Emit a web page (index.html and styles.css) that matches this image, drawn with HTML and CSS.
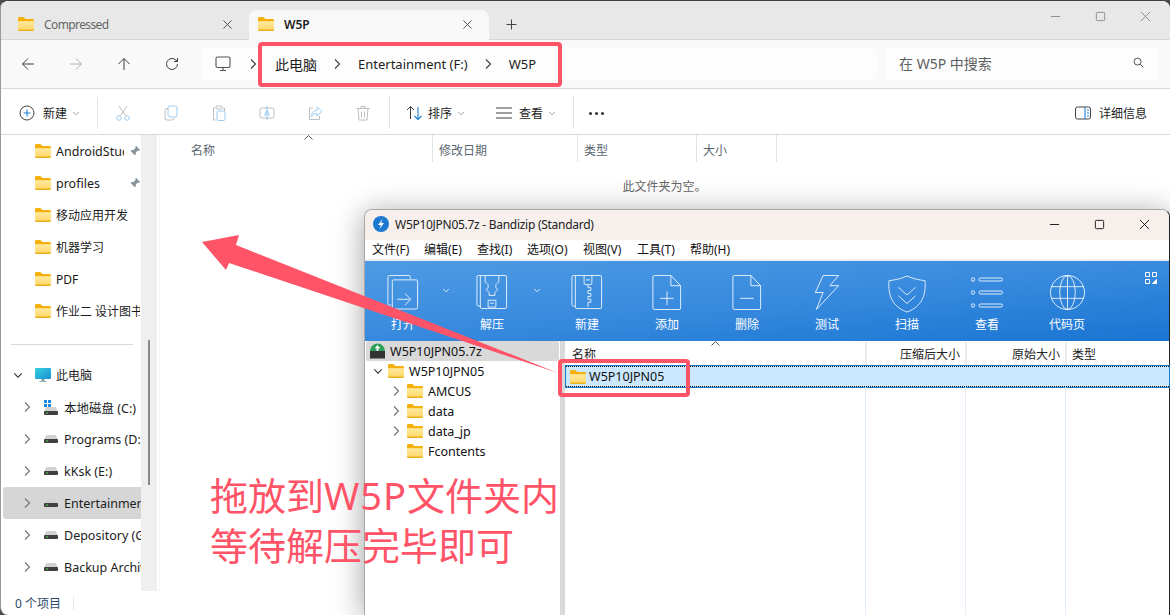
FILE: index.html
```html
<!DOCTYPE html>
<html lang="zh-CN">
<head>
    <meta charset="utf-8">
    <title>拖放到W5P文件夹内</title>
    <link rel="stylesheet" href="styles.css">
</head>
<body>
    <svg class="sprite" width="0" height="0">
        <defs>
            <linearGradient id="folderfront" x1="0" y1="0" x2="0" y2="1">
                <stop offset="0" stop-color="#ffeaa0"/>
                <stop offset="1" stop-color="#fdd663"/>
            </linearGradient>
            <linearGradient id="screen" x1="0" y1="0" x2="1" y2="1">
                <stop offset="0" stop-color="#35d0e0"/>
                <stop offset="1" stop-color="#1c8fd0"/>
            </linearGradient>
            <symbol id="folder" viewBox="0 0 16 14">
                <path d="M0 1.500C0 .7.6 0 1.400 0h4l2 2h7.200c.8 0 1.400.6 1.400 1.400V12H0z" fill="#f4b10d"/>
                <path d="M0 4.200h16v8.400c0 .8-.6 1.400-1.400 1.400H1.400C.6 14 0 13.400 0 12.600z" fill="url(#folderfront)"/>
                <path d="M0 12.800c0 .7.6 1.200 1.400 1.200h13.200c.8 0 1.400-.5 1.400-1.200v-.4H0z" fill="#eeaf1c"/>
            </symbol>
            <symbol id="drive" viewBox="0 0 14 8">
                <path d="M2.500 0h9L14 4.500H0z" fill="#d2d2d2"/>
                <rect y="4" width="14" height="4" rx="1" fill="#3f3f3f"/>
                <rect x="2" y="5.500" width="2" height="1" fill="#5fd35f"/>
            </symbol>
            <symbol id="pin" viewBox="0 0 12 12">
                <path d="M7 .8 11.200 5 10 5.700 8.800 5.400 6.800 7.400 6.900 9.300 5.800 10.200 3.800 8.200.9 11.100.8 11 3.700 8.100 1.700 6.100 2.700 5 4.500 5.100 6.500 3.100 6.300 2z" fill="#8b959c"/>
            </symbol>
            <symbol id="chev-right" viewBox="0 0 8 12">
                <path d="M2 1.500 6.500 6 2 10.500" fill="none" stroke="currentColor" stroke-width="1.200"/>
            </symbol>
            <symbol id="chev-down" viewBox="0 0 12 8">
                <path d="M1.500 1.500 6 6l4.500-4.500" fill="none" stroke="currentColor" stroke-width="1.300"/>
            </symbol>
        </defs>
    </svg>

    <section class="explorer">
        <div class="tabbar">
            <div class="tab tab-off">
                <svg class="folder"><use href="#folder"/></svg>
                <span class="tab-name">Compressed</span>
                <svg class="tab-x" viewBox="0 0 10 10"><path d="M.5.500l9 9m0-9l-9 9"/></svg>
            </div>
            <div class="tab tab-on">
                <svg class="folder"><use href="#folder"/></svg>
                <span class="tab-name">W5P</span>
                <svg class="tab-x" viewBox="0 0 10 10"><path d="M.5.500l9 9m0-9l-9 9"/></svg>
            </div>
            <svg class="tab-plus" viewBox="0 0 11 11"><path d="M5.500.500v10M.5 5.500h10"/></svg>
            <div class="winbtns winbtns-grey">
                <svg viewBox="0 0 12 12"><path d="M1 6h10"/></svg>
                <svg viewBox="0 0 12 12"><rect x="1.500" y="1.500" width="9" height="9" rx="1"/></svg>
                <svg viewBox="0 0 12 12"><path d="M1 1l10 10m0-10L1 11"/></svg>
            </div>
        </div>

        <div class="addrbar">
            <div class="nav">
                <svg viewBox="0 0 14 14"><path d="M13 7H1.500M7 1.500 1.500 7 7 12.500"/></svg>
                <svg class="nav-off" viewBox="0 0 14 14"><path d="M1 7h11.500M7 1.500 12.500 7 7 12.500"/></svg>
                <svg viewBox="0 0 14 14"><path d="M7 13V1.500M1.500 7 7 1.500 12.500 7"/></svg>
                <svg viewBox="0 0 14 14"><path d="M12.500 7a5.500 5.500 0 1 1-1.700-4L12.500 4.500M12.500 1v3.500H9"/></svg>
            </div>
            <div class="addr">
                <svg class="addr-pc" viewBox="0 0 16 16"><rect x="1" y="1" width="14" height="10.500" rx="1.500"/><path d="M5 14.500h6M8 11.500v3"/></svg>
                <svg class="crumb-chev"><use href="#chev-right"/></svg>
                <span class="crumb crumb-cjk">此电脑</span>
                <svg class="crumb-chev"><use href="#chev-right"/></svg>
                <span class="crumb">Entertainment (F:)</span>
                <svg class="crumb-chev"><use href="#chev-right"/></svg>
                <span class="crumb">W5P</span>
            </div>
            <div class="search">
                <span>在 W5P 中搜索</span>
                <svg viewBox="0 0 12 12"><circle cx="5" cy="5" r="3.800"/><path d="M7.800 7.800 11 11"/></svg>
            </div>
        </div>

        <div class="toolbar">
            <div class="tool tool-new">
                <svg class="ic" viewBox="0 0 16 16"><circle cx="8" cy="8" r="7" class="ln"/><path d="M8 4.500v7M4.500 8h7" class="bl"/></svg>
                <span>新建</span>
                <svg class="tool-chev"><use href="#chev-down"/></svg>
            </div>
            <i class="tsep"></i>
            <div class="tool-off">
                <svg class="ic" viewBox="0 0 16 16"><path d="M4 1l6.500 9.500M12 1 5.500 10.500" class="gr"/><circle cx="4" cy="13" r="2.300" class="lb"/><circle cx="12" cy="13" r="2.300" class="lb"/></svg>
                <svg class="ic" viewBox="0 0 16 16"><rect x="5" y="1" width="9" height="11" rx="2" class="lb"/><path d="M5 3.500H4a2 2 0 0 0-2 2V13a2 2 0 0 0 2 2h5a2 2 0 0 0 2-2" class="gr"/></svg>
                <svg class="ic" viewBox="0 0 16 16"><path d="M4 3H2.500v12h2M12 3h1.500v3" class="gr"/><rect x="5" y="1" width="6" height="3" rx="1" class="gr"/><rect x="6" y="6" width="8" height="9.500" rx="1.500" class="lb"/></svg>
                <svg class="ic" viewBox="0 0 16 16"><rect x="1" y="3" width="14" height="10" rx="2" class="gr"/><path d="M5.500 11l2.500-6 2.500 6M6.500 9h3" class="lb"/><path d="M8 1v14" class="lb"/></svg>
                <svg class="ic" viewBox="0 0 16 16"><path d="M6 3H2.500v11.500h10V11" class="gr"/><path d="M10 2l5 4.500-5 4.500V8.500C7 8.500 5.500 9.500 4.500 12c0-4 2-6.500 5.500-6.500z" class="lb"/></svg>
                <svg class="ic" viewBox="0 0 16 16"><path d="M1.500 3.500h13M6 3.500V1.500h4v2M3 3.500l1 11.500h8l1-11.500M6.500 6.500v6M9.500 6.500v6" class="gr"/></svg>
            </div>
            <i class="tsep"></i>
            <div class="tool tool-sort">
                <svg class="ic" viewBox="0 0 16 16"><path d="M1 5l3.500-3.500L8 5M4.500 1.500V14" class="ln"/><path d="M8.500 11l3.500 3.500 3.500-3.500M12 14.500V2" class="bl"/></svg>
                <span>排序</span>
                <svg class="tool-chev"><use href="#chev-down"/></svg>
            </div>
            <div class="tool tool-view">
                <svg class="ic" viewBox="0 0 16 16"><path d="M0 3h16M0 8h16M0 13h16" class="ln"/></svg>
                <span>查看</span>
                <svg class="tool-chev"><use href="#chev-down"/></svg>
            </div>
            <i class="tsep"></i>
            <div class="more"><i></i><i></i><i></i></div>
            <div class="details">
                <svg class="ic" viewBox="0 0 16 14"><rect x=".5" y="1" width="15" height="12" rx="2" class="ln"/><path d="M10 1v12" class="bl"/><path d="M12 4h2M12 7h2M12 10h2" class="bl"/></svg>
                <span>详细信息</span>
            </div>
        </div>

        <div class="main">
            <nav class="side">
                <div class="qrow"><svg class="folder"><use href="#folder"/></svg><span class="qname qname-pin">AndroidStudio</span><svg class="pin"><use href="#pin"/></svg></div>
                <div class="qrow"><svg class="folder"><use href="#folder"/></svg><span class="qname qname-pin">profiles</span><svg class="pin"><use href="#pin"/></svg></div>
                <div class="qrow"><svg class="folder"><use href="#folder"/></svg><span class="qname">移动应用开发</span></div>
                <div class="qrow"><svg class="folder"><use href="#folder"/></svg><span class="qname">机器学习</span></div>
                <div class="qrow"><svg class="folder"><use href="#folder"/></svg><span class="qname">PDF</span></div>
                <div class="qrow"><svg class="folder"><use href="#folder"/></svg><span class="qname">作业二 设计图书</span></div>
                <div class="side-div"></div>
                <div class="pcrow">
                    <svg class="pcrow-chev"><use href="#chev-down"/></svg>
                    <svg class="pcrow-ic" viewBox="0 0 16 16"><rect y="1" width="16" height="11" rx="1" fill="url(#screen)"/><rect x="6.500" y="12" width="3" height="2" fill="#7fa2a8"/><rect x="4.500" y="14" width="7" height="1" fill="#9ab3b8"/></svg>
                    <span>此电脑</span>
                </div>
                <div class="drow">
                    <svg class="drow-chev"><use href="#chev-right"/></svg>
                    <span class="drow-ic drow-sys">
                        <svg class="winlogo" viewBox="0 0 7 7"><path d="M0 0h3v3H0zM4 0h3v3H4zM0 4h3v3H0zM4 4h3v3H4z" fill="#1a8ae0"/></svg>
                        <svg class="drive"><use href="#drive"/></svg>
                    </span>
                    <span class="dname">本地磁盘 (C:)</span>
                </div>
                <div class="drow">
                    <svg class="drow-chev"><use href="#chev-right"/></svg>
                    <span class="drow-ic"><svg class="drive"><use href="#drive"/></svg></span>
                    <span class="dname">Programs (D:)</span>
                </div>
                <div class="drow">
                    <svg class="drow-chev"><use href="#chev-right"/></svg>
                    <span class="drow-ic"><svg class="drive"><use href="#drive"/></svg></span>
                    <span class="dname">kKsk (E:)</span>
                </div>
                <div class="drow drow-on">
                    <svg class="drow-chev"><use href="#chev-right"/></svg>
                    <span class="drow-ic"><svg class="drive"><use href="#drive"/></svg></span>
                    <span class="dname">Entertainment (F:)</span>
                </div>
                <div class="drow">
                    <svg class="drow-chev"><use href="#chev-right"/></svg>
                    <span class="drow-ic"><svg class="drive"><use href="#drive"/></svg></span>
                    <span class="dname">Depository (G:)</span>
                </div>
                <div class="drow">
                    <svg class="drow-chev"><use href="#chev-right"/></svg>
                    <span class="drow-ic"><svg class="drive"><use href="#drive"/></svg></span>
                    <span class="dname">Backup Archive (H:)</span>
                </div>
            </nav>
            <div class="side-scroll"><i></i></div>
            <div class="files">
                <div class="cols">
                    <div class="col col-name">名称</div>
                    <div class="col col-date">修改日期</div>
                    <div class="col col-type">类型</div>
                    <div class="col col-size">大小</div>
                    <svg class="sort-caret" viewBox="0 0 9 5"><path d="M.5 4.500l4-4 4 4"/></svg>
                </div>
                <p class="empty">此文件夹为空。</p>
            </div>
        </div>

        <div class="status"><span>0 个项目</span><i></i></div>
    </section>

    <section class="bandizip">
        <div class="bz-title">
            <svg class="bz-logo" viewBox="0 0 16 16"><circle cx="8" cy="8" r="8" fill="#1c79cf"/><path d="M9.500 3 5 9h2.800l-1.300 4L11 7H8.200z" fill="#fff"/></svg>
            <span class="bz-name">W5P10JPN05.7z - Bandizip (Standard)</span>
            <div class="winbtns winbtns-dark">
                <svg viewBox="0 0 12 12"><path d="M1 6h10"/></svg>
                <svg viewBox="0 0 12 12"><rect x="1.500" y="1.500" width="9" height="9" rx="1"/></svg>
                <svg viewBox="0 0 12 12"><path d="M1 1l10 10m0-10L1 11"/></svg>
            </div>
        </div>
        <div class="bz-menu">
            <span>文件(F)</span><span>编辑(E)</span><span>查找(I)</span><span>选项(O)</span><span>视图(V)</span><span>工具(T)</span><span>帮助(H)</span>
        </div>
        <div class="bz-tools">
            <div class="bz-tool bz-open">
                <svg viewBox="0 0 32 36"><path d="M4 31H2a1.500 1.500 0 0 1-1.500-1.500V2A1.500 1.500 0 0 1 2 .5h20A1.500 1.500 0 0 1 23.500 2v2"/><rect x="5" y="5" width="26" height="30" rx="1.500"/><path d="M10 25h13M18 19l6 6-6 6"/></svg>
                <span>打开</span>
            </div>
            <svg class="bz-drop bz-drop-a"><use href="#chev-down"/></svg>
            <div class="bz-tool bz-extract">
                <svg viewBox="0 0 32 36"><path d="M4 32H2a1.500 1.500 0 0 1-1.500-1.500V2A1.500 1.500 0 0 1 2 .5h3"/><rect x="4" y=".5" width="27" height="34" rx="1.500"/><path d="M9 1v6l3 3v3l-2 2 3 3v3h6v-3l3-3-2-2v-3l3-3V1M12 26h8v7h-8zM14 29h4"/></svg>
                <span>解压</span>
            </div>
            <svg class="bz-drop bz-drop-b"><use href="#chev-down"/></svg>
            <div class="bz-tool bz-new">
                <svg viewBox="0 0 32 36"><path d="M4 32H2a1.500 1.500 0 0 1-1.500-1.500V2A1.500 1.500 0 0 1 2 .5h3"/><rect x="4" y=".5" width="27" height="34" rx="1.500"/><path d="M13 1v7a2 2 0 0 0 2 2h4a2 2 0 0 0 2-2V1M15 5h4M17 10v3h3v3h-3v3h3v3h-3v3h3v3h-3v5"/></svg>
                <span>新建</span>
            </div>
            <div class="bz-tool bz-add">
                <svg viewBox="0 0 30 36"><path d="M.5 2A1.500 1.500 0 0 1 2 .5h17L29 11v23a1.500 1.500 0 0 1-1.500 1.500H2A1.500 1.500 0 0 1 .5 34zM19 .5V11h10M8 24h14M15 17v14"/></svg>
                <span>添加</span>
            </div>
            <div class="bz-tool bz-del">
                <svg viewBox="0 0 30 36"><path d="M.5 2A1.500 1.500 0 0 1 2 .5h17L29 11v23a1.500 1.500 0 0 1-1.500 1.500H2A1.500 1.500 0 0 1 .5 34zM19 .5V11h10M8 24h14"/></svg>
                <span>删除</span>
            </div>
            <div class="bz-tool bz-test">
                <svg viewBox="0 0 26 36"><path d="M9 .5h16L16 11h9L2 35.500 9 18H1z"/></svg>
                <span>测试</span>
            </div>
            <div class="bz-tool bz-scan">
                <svg viewBox="0 0 40 40"><path d="M20 1c6 3 12 4 19 5 1 15-3 27-19 33C4 33 0 21 1 6c7-1 13-2 19-5z"/><path d="M11 13l9 8 9-8M11 22l9 8 9-8"/></svg>
                <span>扫描</span>
            </div>
            <div class="bz-tool bz-view">
                <svg viewBox="0 0 32 33"><circle cx="2" cy="3.500" r="1.700"/><circle cx="2" cy="16.500" r="1.700"/><circle cx="2" cy="29.500" r="1.700"/><rect x="8" y="2" width="23.500" height="3" rx="1.500"/><rect x="8" y="15" width="23.500" height="3" rx="1.500"/><rect x="8" y="28" width="23.500" height="3" rx="1.500"/></svg>
                <span>查看</span>
            </div>
            <div class="bz-tool bz-page">
                <svg viewBox="0 0 36 36"><circle cx="18" cy="18" r="17.500"/><ellipse cx="18" cy="18" rx="8" ry="17.500"/><path d="M18 .5v35M1.500 12h33M1.500 24h33"/></svg>
                <span>代码页</span>
            </div>
            <svg class="bz-grid" viewBox="0 0 12 12"><path d="M.5.500h4v4h-4zM7.500.500h4v4h-4zM.5 7.500h4v4h-4z"/><path d="M11.500 7.500v4h-4z" class="bz-grid-fill"/></svg>
        </div>
        <div class="bz-main">
            <div class="bz-tree">
                <div class="bz-root">
                    <svg class="bz-7z" viewBox="0 0 16 16"><path d="M0 8a8 8 0 0 1 16 0z" fill="#2f9e58"/><path d="M8 1.500 5 5h2v3h2V5h2z" fill="#fff"/><rect y="8" width="16" height="8" fill="#333"/></svg>
                    <span>W5P10JPN05.7z</span>
                </div>
                <div class="bz-row bz-lv0"><svg class="bz-open-chev"><use href="#chev-down"/></svg><svg class="folder"><use href="#folder"/></svg><span>W5P10JPN05</span></div>
                <div class="bz-row bz-lv1"><svg class="bz-chev"><use href="#chev-right"/></svg><svg class="folder"><use href="#folder"/></svg><span>AMCUS</span></div>
                <div class="bz-row bz-lv1"><svg class="bz-chev"><use href="#chev-right"/></svg><svg class="folder"><use href="#folder"/></svg><span>data</span></div>
                <div class="bz-row bz-lv1"><svg class="bz-chev"><use href="#chev-right"/></svg><svg class="folder"><use href="#folder"/></svg><span>data_jp</span></div>
                <div class="bz-row bz-lv2"><svg class="folder"><use href="#folder"/></svg><span>Fcontents</span></div>
            </div>
            <div class="bz-split"></div>
            <div class="bz-list">
                <div class="bz-head">
                    <div class="bz-h bz-h-name">名称</div>
                    <div class="bz-h bz-h-num">压缩后大小</div>
                    <div class="bz-h bz-h-num">原始大小</div>
                    <div class="bz-h bz-h-type">类型</div>
                    <svg class="bz-caret" viewBox="0 0 9 5"><path d="M.5 4.500l4-4 4 4"/></svg>
                </div>
                <div class="bz-item">
                    <svg class="folder"><use href="#folder"/></svg>
                    <span>W5P10JPN05</span>
                </div>
                <div class="bz-body">
                    <i></i><i></i><i></i><i></i>
                </div>
            </div>
        </div>
    </section>

    <div class="mark mark-addr"></div>
    <div class="mark mark-item"></div>
    <svg class="arrow" viewBox="0 0 1170 615"><path d="M202 242 239 235 236 245 558 373 229 263 226 270z"/></svg>
    <p class="note">拖放到<span class="note-lat">W5P</span>文件夹内<br>等待解压完毕即可</p>
</body>
</html>
```

FILE: styles.css
```css
* {
    box-sizing: border-box;
}

html, body {
    margin: 0;
    height: 100%;
}

body {
    position: relative;
    width: 1170px;
    height: 615px;
    overflow: hidden;
    background-color: #4a4a4a;
    font-family: "Noto Sans", "Noto Sans CJK SC", sans-serif;
    font-size: 12px;
    color: #1c1c1c;
}

svg {
    display: block;
    flex: none;
}

.sprite {
    position: absolute;
}

.folder {
    width: 16px;
    height: 14px;
    flex: none;
}

/* file explorer window */
.explorer {
    position: absolute;
    left: 0;
    top: 0;
    width: 1170px;
    height: 615px;
    display: flex;
    flex-direction: column;
    overflow: hidden;
    background-color: #ffffff;
    border-top: 1px solid #3e3e3e;
    border-left: 1px solid #999999;
    border-radius: 8px 8px 0 8px;
}

.tabbar {
    height: 39px;
    flex: none;
    display: flex;
    align-items: flex-end;
    padding-left: 1px;
    background-color: #e8e8e8;
    border-bottom: 1px solid #d6d6d6;
}

.tab {
    width: 240px;
    height: 30px;
    margin-left: 7px;
    margin-bottom: -1px;
    padding: 0 17px 2px 9px;
    display: flex;
    align-items: center;
    border-radius: 8px 8px 0 0;
    color: #666666;
    font-size: 12px;
}

.tab .folder {
    margin-right: 10px;
}

.tab-off .tab-name {
    letter-spacing: -0.6px;
}

.tab-on {
    margin-left: 0;
    color: #1c1c1c;
    font-weight: 600;
    background-color: #f8f8f8;
}

.tab-name {
    flex: 1;
}

.tab-x {
    width: 9px;
    height: 9px;
}

.tab-x path, .tab-plus path {
    fill: none;
    stroke: #444444;
    stroke-width: 1;
}

.tab-plus {
    width: 11px;
    height: 11px;
    margin: 0 0 9px 17px;
}

.winbtns {
    margin-left: auto;
    display: flex;
    gap: 34px;
    padding-right: 19px;
}

.winbtns svg {
    width: 11px;
    height: 11px;
    fill: none;
    stroke-width: 1;
}

.winbtns-grey {
    align-self: flex-start;
    margin-top: 10px;
    stroke: #8a8a8a;
}

.winbtns-dark {
    stroke: #111111;
}

.addrbar {
    height: 49px;
    flex: none;
    display: flex;
    align-items: center;
    padding: 0 11px 1px 0;
    background-color: #f9f9f9;
    border-bottom: 1px solid #d8d8d8;
}

.nav {
    width: 201px;
    padding-left: 20px;
    display: flex;
    gap: 34px;
}

.nav svg {
    width: 14px;
    height: 14px;
    fill: none;
    stroke: #3d3d3d;
    stroke-width: 1;
}

.nav .nav-off {
    stroke: #b0b0b0;
}

.addr {
    width: 675px;
    height: 32px;
    display: flex;
    align-items: center;
    padding-left: 13px;
    background-color: #fdfdfd;
    border-radius: 5px;
}

.addr-pc {
    width: 16px;
    height: 16px;
    fill: none;
    stroke: #555555;
    stroke-width: 1.100;
}

.crumb-chev {
    width: 8px;
    height: 12px;
    margin: 0 17px 0 16px;
    color: #444444;
}

.addr-pc + .crumb-chev {
    margin: 0 18px;
}

.crumb {
    font-size: 13px;
    color: #1c1c1c;
}

.crumb-cjk {
    font-size: 14px;
}

.search {
    width: 273px;
    height: 32px;
    margin-left: 8px;
    padding: 0 14px 2px;
    display: flex;
    align-items: center;
    justify-content: space-between;
    background-color: #fdfdfd;
    border-radius: 5px;
    font-size: 14px;
    color: #5e5e5e;
}

.search svg {
    width: 11px;
    height: 11px;
    fill: none;
    stroke: #444444;
}

.toolbar {
    height: 46px;
    flex: none;
    display: flex;
    align-items: center;
    padding: 3px 0 0 18px;
    border-bottom: 1px solid #d8d8d8;
}

.ic {
    width: 16px;
    height: 16px;
    fill: none;
}

.ln {
    stroke: #404040;
    stroke-width: 1;
}

.bl {
    stroke: #1a7fd4;
    stroke-width: 1.100;
}

.gr {
    stroke: #bdbdbd;
    stroke-width: 1;
}

.lb {
    stroke: #9bcbf0;
    stroke-width: 1;
}

.tool {
    display: flex;
    align-items: center;
}

.tool-chev {
    width: 8px;
    height: 5px;
    margin-left: 5px;
    color: #8a8a8a;
}

.tool-new span {
    margin-left: 8px;
}

.tsep {
    width: 1px;
    height: 32px;
    margin-left: 17px;
    background-color: #e2e2e2;
}

.tool-off {
    display: flex;
    gap: 32px;
    margin-left: 17px;
}

.tool-off + .tsep {
    margin-left: 18px;
}

.tool-sort {
    margin-left: 16px;
}

.tool-sort span {
    margin-left: 6px;
}

.tool-view {
    margin-left: 31px;
}

.tool-view span {
    margin-left: 7px;
}

.more {
    display: flex;
    gap: 3px;
    margin-left: 15px;
}

.more i {
    width: 3px;
    height: 3px;
    border-radius: 50%;
    background-color: #333333;
}

.details {
    margin-left: auto;
    padding-right: 23px;
    display: flex;
    align-items: center;
    gap: 8px;
}

.main {
    flex: 1;
    min-height: 0;
    display: flex;
}

.side {
    width: 140px;
    flex: none;
    overflow: hidden;
    font-size: 12px;
}

.qrow {
    height: 32px;
    padding-left: 34px;
    display: flex;
    align-items: center;
}

.qname {
    margin-left: 5px;
    white-space: nowrap;
    overflow: hidden;
    color: #1a1a1a;
    width: 84px;
}

.qname-pin {
    width: 68px;
    font-size: 12.500px;
}

.pin {
    width: 12px;
    height: 12px;
    margin-left: 5px;
}

.side-div {
    height: 1px;
    margin: 17px 8px 14px 10px;
    background-color: #d8d8d8;
}

.pcrow {
    height: 32px;
    display: flex;
    align-items: center;
    padding-left: 12px;
}

.pcrow-chev {
    width: 10px;
    height: 7px;
    color: #333333;
}

.pcrow-ic {
    width: 16px;
    height: 16px;
    margin-left: 12px;
    margin-right: 5px;
}

.drow {
    height: 32px;
    margin-left: 2px;
    padding-left: 20px;
    display: flex;
    align-items: center;
    white-space: nowrap;
    overflow: hidden;
    font-size: 12.500px;
}

.drow-on {
    background-color: #d6d6d6;
    border-radius: 3px 0 0 3px;
}

.drow-chev {
    width: 8px;
    height: 12px;
    color: #777777;
}

.drow-ic {
    width: 14px;
    height: 14px;
    margin: 0 6px 0 13px;
    display: flex;
    flex-direction: column;
    justify-content: center;
    flex: none;
}

.drow-sys {
    justify-content: flex-start;
}

.winlogo {
    width: 7px;
    height: 7px;
}

.drive {
    width: 14px;
    height: 8px;
}

.side-scroll {
    width: 16px;
    flex: none;
    background-color: #efefef;
    display: flex;
    justify-content: center;
}

.side-scroll i {
    width: 2px;
    height: 145px;
    margin-top: 205px;
    background-color: #8a8a8a;
}

.files {
    flex: 1;
    margin-left: 2px;
    border-left: 1px solid #f3f3f3;
}

.cols {
    position: relative;
    height: 27px;
    display: flex;
    align-items: center;
    color: #5b6770;
    font-size: 12px;
}

.col {
    height: 27px;
    display: flex;
    align-items: center;
    padding-top: 2px;
    padding-left: 6px;
    border-right: 1px solid #e2e2e2;
}

.col-name {
    width: 273px;
    padding-left: 31px;
}

.col-date {
    width: 145px;
}

.col-type {
    width: 119px;
}

.col-size {
    width: 80px;
}

.sort-caret {
    position: absolute;
    left: 144px;
    top: 0;
    width: 9px;
    height: 5px;
    fill: none;
    stroke: #555555;
}

.empty {
    margin: 15px 0 0;
    text-align: center;
    width: 1009px;
    color: #666666;
    font-size: 12px;
}

.status {
    height: 24px;
    flex: none;
    display: flex;
    align-items: center;
    padding-left: 14px;
    color: #2c4a68;
}

.status i {
    width: 1px;
    height: 14px;
    margin-left: 12px;
    background-color: #e6e6e6;
}

/* bandizip window */
.bandizip {
    position: absolute;
    left: 364px;
    top: 209px;
    width: 806px;
    height: 406px;
    display: flex;
    flex-direction: column;
    background-color: #ffffff;
    border: 1px solid #a8a8a8;
    border-right-color: #222222;
    border-bottom: 0;
    border-radius: 8px 8px 0 0;
    box-shadow: 0 4px 30px rgba(0, 0, 0, 0.38);
}

.bz-title {
    height: 30px;
    flex: none;
    display: flex;
    align-items: center;
    padding: 0 0 2px 8px;
    background-color: #f6efec;
    border-radius: 7px 7px 0 0;
}

.bz-logo {
    width: 16px;
    height: 16px;
}

.bz-name {
    margin-left: 6px;
    color: #222222;
    letter-spacing: -0.28px;
}

.bz-menu {
    height: 19px;
    flex: none;
    display: flex;
    align-items: center;
    padding-left: 7px;
    border-bottom: 1px solid #ffffff;
    color: #111111;
}

.bz-menu span {
    width: 53px;
    white-space: nowrap;
}

.bz-menu span:first-child {
    width: 52px;
}

.bz-menu span:nth-child(3) {
    width: 50px;
}

.bz-menu span:nth-child(4) {
    width: 56px;
}

.bz-menu span:nth-child(5) {
    width: 54px;
}

.bz-tools {
    position: relative;
    height: 82px;
    flex: none;
    border-top: 2px solid #eeeeee;
    display: flex;
    background: linear-gradient(175deg, #4e9be3 0%, #3b8cdf 45%, #1975d2 100%);
    color: #ffffff;
}

.bz-tool {
    width: 80px;
    padding-top: 14px;
    display: flex;
    flex-direction: column;
    align-items: center;
    flex: none;
    font-size: 12px;
}

.bz-tool svg {
    height: 35px;
    fill: none;
    stroke: #ffffff;
    stroke-width: 1;
    stroke-opacity: 0.85;
}

.bz-tool span {
    margin-top: 6px;
    line-height: 17px;
}

.bz-open {
    margin-left: -2px;
}

.bz-open svg {
    width: 32px;
}

.bz-extract {
    margin-left: 9px;
}

.bz-extract svg, .bz-new svg {
    width: 32px;
}

.bz-new {
    margin-left: 15px;
}

.bz-add svg, .bz-del svg {
    width: 30px;
}

.bz-test svg {
    width: 26px;
}

.bz-scan svg {
    width: 38px;
    height: 38px;
}

.bz-scan span {
    margin-top: 3px;
}

.bz-view svg {
    width: 32px;
}

.bz-page svg {
    width: 35px;
}

.bz-drop {
    position: absolute;
    top: 27px;
    width: 8px;
    height: 5px;
    color: #ffffff;
}

.bz-drop-a {
    left: 77px;
}

.bz-drop-b {
    left: 168px;
}

.bz-grid {
    position: absolute;
    left: 780px;
    top: 11px;
    width: 12px;
    height: 12px;
    fill: none;
    stroke: #ffffff;
}

.bz-grid-fill {
    fill: #ffffff;
}

.bz-main {
    flex: 1;
    min-height: 0;
    display: flex;
}

.bz-tree {
    width: 195px;
    flex: none;
    color: #111111;
    font-size: 12.500px;
}

.bz-root {
    height: 20px;
    margin: 0 1px;
    padding-left: 4px;
    display: flex;
    align-items: center;
    gap: 5px;
    background-color: #d9d9d9;
    border-radius: 2px;
}

.bz-7z {
    width: 15px;
    height: 16px;
}

.bz-row {
    height: 20px;
    display: flex;
    align-items: center;
}

.bz-row .folder {
    margin-right: 5px;
}

.bz-lv0 {
    padding-left: 8px;
}

.bz-lv0 .bz-open-chev {
    margin-right: 5px;
}

.bz-lv1 {
    padding-left: 27px;
}

.bz-lv1 .bz-chev {
    margin-right: 7px;
}

.bz-lv2 {
    padding-left: 42px;
}

.bz-open-chev {
    width: 10px;
    height: 7px;
    color: #333333;
}

.bz-chev {
    width: 8px;
    height: 12px;
    color: #777777;
}

.bz-split {
    width: 5px;
    flex: none;
    background-color: #d9d9d9;
}

.bz-list {
    flex: 1;
    display: flex;
    flex-direction: column;
    min-width: 0;
}

.bz-head {
    position: relative;
    height: 25px;
    flex: none;
    display: flex;
    align-items: flex-start;
    padding-top: 1px;
    color: #222222;
}

.bz-h {
    height: 23px;
    display: flex;
    align-items: center;
    border-right: 2px solid #ebebeb;
}

.bz-h-name {
    width: 302px;
    padding-left: 7px;
}

.bz-h-num {
    width: 100px;
    justify-content: flex-end;
    padding-right: 5px;
}

.bz-h-type {
    padding-left: 5px;
    border-right: 0;
}

.bz-caret {
    position: absolute;
    left: 146px;
    top: 0;
    width: 9px;
    height: 5px;
    fill: none;
    stroke: #555555;
}

.bz-item {
    height: 21px;
    flex: none;
    margin-left: 1px;
    display: flex;
    align-items: center;
    gap: 3px;
    padding-left: 4px;
    background-color: #cce8ff;
    border-top: 1px dotted #111111;
    border-bottom: 1px dotted #111111;
    box-shadow: 0 0 0 1px #1678c8;
    color: #111111;
    font-size: 12.500px;
}

.bz-body {
    flex: 1;
    display: flex;
}

.bz-body i {
    width: 100px;
    border-right: 1px solid #e3effa;
}

.bz-body i:first-child {
    width: 301px;
}

.bz-body i:last-child {
    border-right: 0;
}

/* red annotations on top of the screenshot */
.mark {
    position: absolute;
    border: 4px solid #ff5468;
    border-radius: 4px;
}

.mark-addr {
    left: 258px;
    top: 42px;
    width: 304px;
    height: 45px;
}

.mark-item {
    left: 558px;
    top: 359px;
    width: 132px;
    height: 38px;
}

.arrow {
    position: absolute;
    left: 0;
    top: 0;
    width: 1170px;
    height: 615px;
    fill: #ff5468;
}

.note {
    position: absolute;
    left: 210px;
    top: 470px;
    margin: 0;
    font-family: "Noto Sans", "Noto Sans CJK SC", sans-serif;
    font-size: 38px;
    line-height: 50px;
    color: #ff5468;
    white-space: nowrap;
}

.note-lat {
    letter-spacing: 1px;
}
```
